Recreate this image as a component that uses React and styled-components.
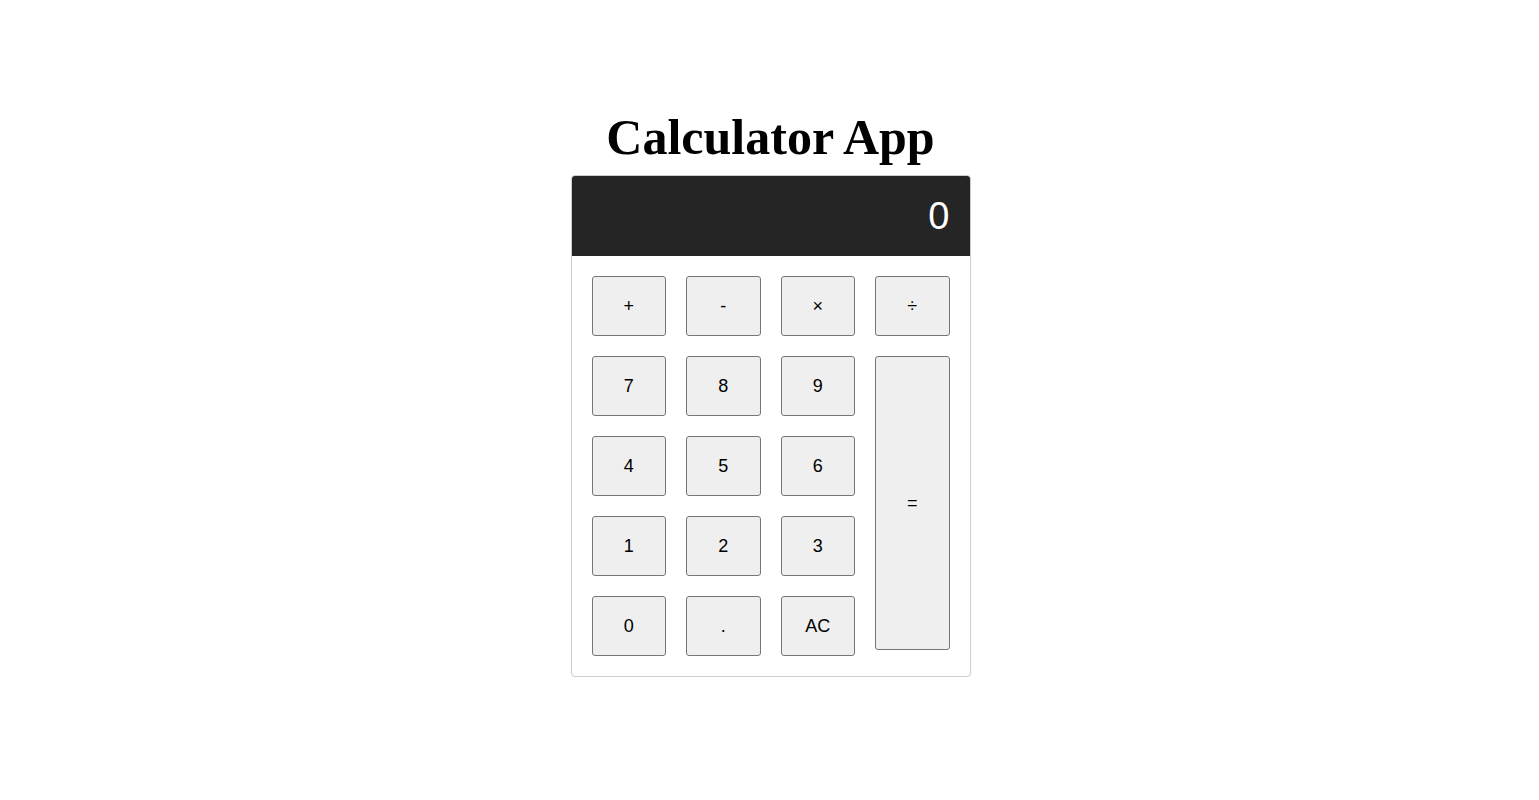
import React, { useState } from "react";
import styled, { createGlobalStyle } from "styled-components";

const Global = createGlobalStyle`
  body {
    margin: 0;
    background: #ffffff;
    font-family: "Liberation Serif", "Times New Roman", serif;
  }
`;

const Page = styled.div`
  display: flex;
  flex-direction: column;
  align-items: center;
  padding: 108px 0 0 2px;
`;

const Title = styled.h1`
  margin: 0 0 9px;
  font-family: "Liberation Serif", "Times New Roman", serif;
  font-size: 50px;
  font-weight: bold;
  color: #000;
`;

const Calculator = styled.div`
  width: 400px;
  box-sizing: border-box;
  border: 1px solid #cccccc;
  border-radius: 4px;
  overflow: hidden;
`;

const Display = styled.div`
  height: 80px;
  background: #252525;
  color: #ffffff;
  display: flex;
  align-items: center;
  justify-content: flex-end;
  padding: 0 20px;
  font-family: "Liberation Sans", Arial, sans-serif;
  font-size: 38px;
`;

const Keys = styled.div`
  display: grid;
  grid-template-columns: repeat(4, 1fr);
  grid-auto-rows: 60px;
  gap: 20px;
  padding: 20px;
`;

const Key = styled.button`
  box-sizing: border-box;
  height: ${(p) => (p.$tall ? "294px" : "60px")};
  grid-column: ${(p) => (p.$tall ? "4" : "auto")};
  grid-row: ${(p) => (p.$tall ? "2 / span 4" : "auto")};
  align-self: start;
  background: #efefef;
  border: 1px solid #767676;
  border-radius: 3px;
  color: #000;
  font-family: "Liberation Sans", Arial, sans-serif;
  font-size: 18px;
  padding: 0;
  cursor: pointer;
`;

const keys = ["+", "-", "×", "÷", "7", "8", "9", "4", "5", "6", "1", "2", "3", "0", ".", "AC"];

export default function App() {
  const [value, setValue] = useState("0");
  const press = (k) => {
    if (k === "AC") setValue("0");
  };
  return (
    <>
      <Global />
      <Page>
        <Title>Calculator App</Title>
        <Calculator>
          <Display>{value}</Display>
          <Keys>
            {keys.map((k) => (
              <Key key={k} onClick={() => press(k)}>
                {k}
              </Key>
            ))}
            <Key $tall onClick={() => press("=")}>=</Key>
          </Keys>
        </Calculator>
      </Page>
    </>
  );
}
